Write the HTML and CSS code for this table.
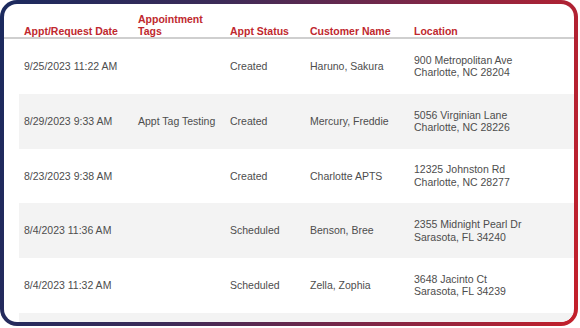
FILE: index.html
```html
<!DOCTYPE html>
<html>
<head>
<meta charset="utf-8">
<link rel="stylesheet" href="styles.css">
</head>
<body>
<div class="frame">
  <div class="inner">
    <div class="head">
      <div>Appt/Request Date</div>
      <div>Appointment<br>Tags</div>
      <div>Appt Status</div>
      <div>Customer Name</div>
      <div>Location</div>
    </div>
    <div class="rows">
      <div class="row">
        <div>9/25/2023 11:22 AM</div>
        <div></div>
        <div>Created</div>
        <div>Haruno, Sakura</div>
        <div>900 Metropolitan Ave<br>Charlotte, NC 28204</div>
      </div>
      <div class="row alt">
        <div>8/29/2023 9:33 AM</div>
        <div>Appt Tag Testing</div>
        <div>Created</div>
        <div>Mercury, Freddie</div>
        <div>5056 Virginian Lane<br>Charlotte, NC 28226</div>
      </div>
      <div class="row">
        <div>8/23/2023 9:38 AM</div>
        <div></div>
        <div>Created</div>
        <div>Charlotte APTS</div>
        <div>12325 Johnston Rd<br>Charlotte, NC 28277</div>
      </div>
      <div class="row alt">
        <div>8/4/2023 11:36 AM</div>
        <div></div>
        <div>Scheduled</div>
        <div>Benson, Bree</div>
        <div>2355 Midnight Pearl Dr<br>Sarasota, FL 34240</div>
      </div>
      <div class="row">
        <div>8/4/2023 11:32 AM</div>
        <div></div>
        <div>Scheduled</div>
        <div>Zella, Zophia</div>
        <div>3648 Jacinto Ct<br>Sarasota, FL 34239</div>
      </div>
      <div class="row alt"></div>
    </div>
  </div>
</div>
</body>
</html>
```
FILE: styles.css
```css
html, body {
  margin: 0;
  padding: 0;
  background: #ffffff;
}
body {
  font-family: "Liberation Sans", Arial, sans-serif;
  font-size: 10.5px;
  color: #4d4d4d;
}
.frame {
  width: 578px;
  height: 326px;
  box-sizing: border-box;
  border: 4px solid transparent;
  border-radius: 17px;
  background:
    linear-gradient(#ffffff, #ffffff) padding-box,
    linear-gradient(100deg, #1b2a5e 0%, #3d2b58 35%, #7a2748 65%, #c4202b 100%) border-box;
  overflow: hidden;
}
.inner {
  height: 100%;
  overflow: hidden;
  border-radius: 13px;
}
.head {
  display: grid;
  grid-template-columns: 114px 92px 80px 104px 1fr;
  grid-template-rows: 1fr;
  align-items: end;
  align-content: end;
  height: 35px;
  box-sizing: border-box;
  padding: 0 0 0 20px;
  border-bottom: 2px solid #cfcfcf;
  color: #c0282e;
  font-weight: bold;
  line-height: 12px;
}
.rows {
  margin-left: 15px;
}
.row {
  display: grid;
  grid-template-columns: 114px 92px 80px 104px 1fr;
  align-items: center;
  height: 54.75px;
  padding-left: 5px;
  box-sizing: border-box;
  line-height: 12.5px;
}
.row.alt {
  background: #f3f3f3;
}
```
